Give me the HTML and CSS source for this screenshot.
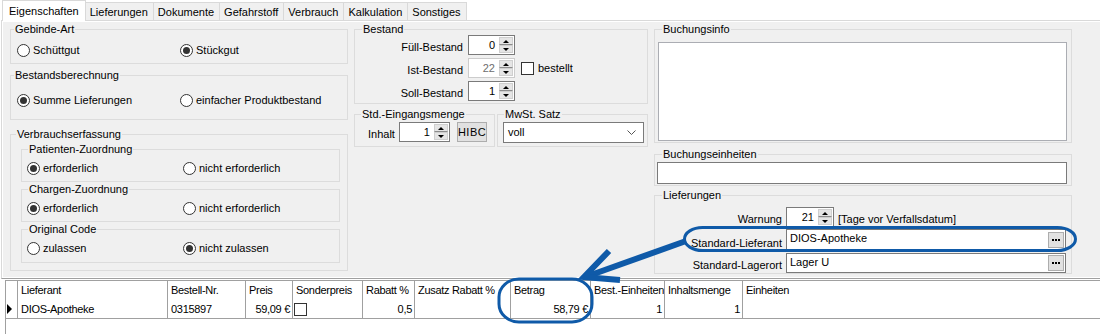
FILE: index.html
```html
<!DOCTYPE html>
<html lang="de">
<head>
  <meta charset="UTF-8" />
  <title>Artikel - Eigenschaften</title>
  <link rel="stylesheet" href="styles.css">
</head>
<body>
  <div class="tabs">
    <div class="tab active">Eigenschaften</div>
    <div class="tab">Lieferungen</div>
    <div class="tab">Dokumente</div>
    <div class="tab">Gefahrstoff</div>
    <div class="tab">Verbrauch</div>
    <div class="tab">Kalkulation</div>
    <div class="tab">Sonstiges</div>
  </div>

  <div class="panel">
    <div class="form">
      <!-- linke Spalte -->
      <div class="col">
        <fieldset class="grp gebinde">
          <legend>Gebinde-Art</legend>
          <div class="radios">
            <label class="radio"><span class="dot"></span>Schüttgut</label>
            <label class="radio"><span class="dot on"></span>Stückgut</label>
          </div>
        </fieldset>

        <fieldset class="grp berechnung">
          <legend>Bestandsberechnung</legend>
          <div class="radios">
            <label class="radio"><span class="dot on"></span>Summe Lieferungen</label>
            <label class="radio"><span class="dot"></span>einfacher Produktbestand</label>
          </div>
        </fieldset>

        <fieldset class="grp verbrauch">
          <legend>Verbrauchserfassung</legend>
          <div class="subs">
            <fieldset class="grp sub">
              <legend>Patienten-Zuordnung</legend>
              <div class="radios">
                <label class="radio"><span class="dot on"></span>erforderlich</label>
                <label class="radio"><span class="dot"></span>nicht erforderlich</label>
              </div>
            </fieldset>
            <fieldset class="grp sub">
              <legend>Chargen-Zuordnung</legend>
              <div class="radios">
                <label class="radio"><span class="dot on"></span>erforderlich</label>
                <label class="radio"><span class="dot"></span>nicht erforderlich</label>
              </div>
            </fieldset>
            <fieldset class="grp sub last">
              <legend>Original Code</legend>
              <div class="radios">
                <label class="radio"><span class="dot"></span>zulassen</label>
                <label class="radio"><span class="dot on"></span>nicht zulassen</label>
              </div>
            </fieldset>
          </div>
        </fieldset>
      </div>

      <!-- mittlere Spalte -->
      <div class="col">
        <fieldset class="grp bestand">
          <legend>Bestand</legend>
          <div class="rows">
            <span class="lbl">Füll-Bestand</span>
            <div class="spin"><span class="num">0</span><span class="arr"><i class="up"></i><i class="dn"></i></span></div>
            <span></span>

            <span class="lbl">Ist-Bestand</span>
            <div class="spin off"><span class="num">22</span><span class="arr"><i class="up"></i><i class="dn"></i></span></div>
            <label class="check"><span class="box"></span>bestellt</label>

            <span class="lbl">Soll-Bestand</span>
            <div class="spin"><span class="num">1</span><span class="arr"><i class="up"></i><i class="dn"></i></span></div>
            <span></span>
          </div>
        </fieldset>

        <div class="pair">
          <fieldset class="grp eingang">
            <legend>Std.-Eingangsmenge</legend>
            <div class="line">
              <span class="lbl">Inhalt</span>
              <div class="spin inhalt"><span class="num">1</span><span class="arr"><i class="up"></i><i class="dn"></i></span></div>
              <button class="btn hibc">HIBC</button>
            </div>
          </fieldset>
          <fieldset class="grp mwst">
            <legend>MwSt. Satz</legend>
            <div class="combo">
              <span>voll</span>
              <svg width="9" height="6" viewBox="0 0 9 6"><polyline points="0.5,0.5 4.5,4.5 8.5,0.5" fill="none" stroke="#555" stroke-width="1"/></svg>
            </div>
          </fieldset>
        </div>
      </div>

      <!-- rechte Spalte -->
      <div class="col">
        <fieldset class="grp info">
          <legend>Buchungsinfo</legend>
          <div class="memo"></div>
        </fieldset>

        <fieldset class="grp einheiten">
          <legend>Buchungseinheiten</legend>
          <div class="edit wide"></div>
        </fieldset>

        <fieldset class="grp liefer">
          <legend>Lieferungen</legend>
          <div class="rows">
            <span class="lbl">Warnung</span>
            <div class="warn">
              <div class="spin tage"><span class="num">21</span><span class="arr"><i class="up"></i><i class="dn"></i></span></div>
              <span class="hint">[Tage vor Verfallsdatum]</span>
            </div>

            <span class="lbl">Standard-Lieferant</span>
            <div class="edit lookup tall"><span>DIOS-Apotheke</span><button class="dots"><i></i><i></i><i></i></button></div>

            <span class="lbl">Standard-Lagerort</span>
            <div class="edit lookup"><span>Lager U</span><button class="dots"><i></i><i></i><i></i></button></div>
          </div>
        </fieldset>
      </div>
    </div>
  </div>

  <div class="grid-wrap">
    <table class="grid">
      <colgroup>
        <col class="w-ind"><col class="w-lief"><col class="w-nr"><col class="w-preis"><col class="w-sonder">
        <col class="w-rabatt"><col class="w-zusatz"><col class="w-betrag"><col class="w-best"><col class="w-inhalt"><col>
      </colgroup>
      <tr>
        <th></th>
        <th>Lieferant</th>
        <th>Bestell-Nr.</th>
        <th>Preis</th>
        <th>Sonderpreis</th>
        <th>Rabatt %</th>
        <th>Zusatz Rabatt %</th>
        <th>Betrag</th>
        <th>Best.-Einheiten</th>
        <th>Inhaltsmenge</th>
        <th>Einheiten</th>
      </tr>
      <tr class="data">
        <td class="ind"><span class="cur"></span></td>
        <td>DIOS-Apotheke</td>
        <td>0315897</td>
        <td class="r">59,09 €</td>
        <td class="c-chk"><span class="box"></span></td>
        <td class="r">0,5</td>
        <td></td>
        <td class="r">58,79 €</td>
        <td class="r">1</td>
        <td class="r">1</td>
        <td></td>
      </tr>
    </table>
  </div>

  <!-- Markierungen aus dem Screenshot -->
  <svg class="marks" width="1100" height="334" viewBox="0 0 1100 334">
    <g fill="none" stroke="#0f5aa8" stroke-width="3">
      <rect x="684.5" y="227.5" width="391" height="23" rx="18" ry="11.5"/>
      <rect x="499" y="279" width="93" height="43" rx="20" ry="18"/>
    </g>
    <g fill="none" stroke="#0f5aa8" stroke-width="6">
      <line x1="686" y1="241" x2="588" y2="276"/>
      <polyline points="609,251 584,277 620,280"/>
    </g>
  </svg>
</body>
</html>
```

FILE: styles.css
```css
*, *::before, *::after { box-sizing: border-box; }
html, body { margin: 0; padding: 0; }
body {
  font-family: "Liberation Sans", Arial, sans-serif;
  font-size: 11px;
  line-height: 13px;
  color: #000;
  background: #fff;
  width: 1100px;
  height: 334px;
  overflow: hidden;
  position: relative;
}

/* Reiter */
.tabs {
  display: flex;
  align-items: flex-end;
  height: 20px;
  padding-left: 2px;
}
.tab {
  height: 18px;
  padding: 3px 5px 0 4px;
  margin-left: -1px;
  border: 1px solid #d9d9d9;
  border-bottom: none;
  background: #f0f0f0;
}
.tab.active {
  height: 21px;
  margin: 0 0 -1px 0;
  padding: 4px 6px 0 6px;
  background: #fff;
  position: relative;
  z-index: 1;
}

.panel {
  margin-left: 1px;
  width: 1110px;
  height: 259px;
  border: 1px solid #d9d9d9;
  border-bottom-color: #a0a0a0;
  background: #fff;
  padding: 1px;
}
.form {
  height: 100%;
  background: #f0f0f0;
  display: grid;
  grid-template-columns: 338px 294px 418px;
  column-gap: 6px;
  align-items: start;
  padding: 1px 0 0 7px;
}
.col { display: flex; flex-direction: column; }

/* Gruppenrahmen */
.grp {
  margin: 0;
  padding: 0;
  min-width: 0;
  border: 1px solid #dcdcdc;
}
.grp > legend {
  margin-left: 6px;
  padding: 0 1px;
  line-height: 13px;
}

.radios {
  display: grid;
  grid-template-columns: 163px auto;
  padding: 8px 0 0 6px;
}
.radio { display: flex; align-items: center; height: 13px; }
.dot {
  width: 13px;
  height: 13px;
  margin-right: 3px;
  border: 1px solid #333;
  border-radius: 50%;
  background: #fff;
  display: flex;
  align-items: center;
  justify-content: center;
}
.dot.on::after {
  content: "";
  width: 7px;
  height: 7px;
  border-radius: 50%;
  background: #333;
}

.gebinde { height: 41px; }
.gebinde > legend, .berechnung > legend { margin-left: 3px; }
.berechnung { height: 51px; margin-top: 5px; }
.berechnung .radios { padding-top: 12px; }
.verbrauch { height: 143px; margin-top: 8px; }
.verbrauch > legend { margin-left: 5px; }
.subs { padding: 2px 7px 0 10px; }
.sub { height: 39px; }
.sub + .sub { margin-top: 1px; }
.sub.last { height: 40px; }
.sub .radios { grid-template-columns: 156px auto; padding: 6px 0 0 5px; }

/* Eingabefelder */
.spin {
  display: flex;
  height: 20px;
  border: 1px solid #7a7a7a;
  background: #fff;
}
.spin .num { flex: 1; text-align: right; padding: 3px 3px 0 0; }
.spin .arr {
  width: 16px;
  display: flex;
  flex-direction: column;
  padding: 1px;
}
.spin .arr i {
  flex: 1;
  display: flex;
  align-items: center;
  justify-content: center;
  background: #e5e5e5;
  border: 1px solid #cfcfcf;
}
.spin .arr i.up { border-bottom-color: #8c8c8c; }
.spin .arr i.up::before {
  content: "";
  border-left: 3px solid transparent;
  border-right: 3px solid transparent;
  border-bottom: 3px solid #000;
}
.spin .arr i.dn::before {
  content: "";
  border-left: 3px solid transparent;
  border-right: 3px solid transparent;
  border-top: 3px solid #000;
}
.spin.off { border-color: #cccccc; }
.spin.off .num { color: #6d6d6d; }

.box {
  display: inline-block;
  width: 13px;
  height: 13px;
  border: 1px solid #333;
  background: #fff;
}
.check { display: flex; align-items: center; gap: 4px; }

.lbl { text-align: right; align-self: end; padding-bottom: 1px; white-space: nowrap; }

/* Bestand */
.bestand { height: 81px; }
.bestand > legend { margin-left: 7px; }
.bestand .rows {
  display: grid;
  grid-template-columns: 108px 47px auto;
  grid-auto-rows: 20px;
  column-gap: 5px;
  row-gap: 3px;
  margin-top: -1px;
}
.bestand .check { margin-left: 1px; }

.pair { display: flex; margin-top: 4px; }
.eingang { width: 141px; height: 39px; }
.mwst { width: 151px; height: 39px; margin-left: 2px; }
.eingang > legend, .mwst > legend { margin-left: 6px; }
.eingang .line {
  display: flex;
  align-items: flex-end;
  padding: 1px 0 0 13px;
}
.eingang .lbl { padding-bottom: 1px; }
.spin.inhalt { width: 51px; margin-left: 4px; }
.btn {
  font: inherit;
  color: #000;
  background: #e1e1e1;
  border: 1px solid #adadad;
  padding: 0;
}
.hibc { width: 30px; height: 20px; margin-left: 7px; letter-spacing: 0.5px; }

.combo {
  margin: 1px 0 0 5px;
  width: 141px;
  height: 21px;
  border: 1px solid #7a7a7a;
  background: #fff;
  display: flex;
  align-items: center;
  justify-content: space-between;
  padding: 0 7px 0 4px;
}

/* rechte Spalte */
.info { height: 120px; }
.info > legend, .einheiten > legend, .liefer > legend { margin-left: 7px; }
.memo {
  margin: 6px 0 0 3px;
  width: 409px;
  height: 99px;
  border: 1px solid #abadb3;
  background: #fff;
}
.einheiten { height: 38px; margin-top: 5px; }
.edit {
  border: 1px solid #7a7a7a;
  background: #fff;
}
.edit.wide { margin: 1px 0 0 2px; width: 410px; height: 22px; }
.liefer { height: 85px; margin-top: 3px; }
.liefer .rows {
  display: grid;
  grid-template-columns: 127px 280px;
  column-gap: 4px;
  row-gap: 2px;
  padding-top: 5px;
}
.warn { display: flex; align-items: flex-end; }
.spin.tage { width: 48px; }
.hint { margin-left: 4px; padding-bottom: 1px; }
.lookup {
  display: flex;
  justify-content: space-between;
  align-items: center;
  height: 20px;
  padding: 0 1px 0 3px;
}
.lookup.tall { height: 22px; }
.lookup span { align-self: flex-start; padding-top: 2px; }
.dots {
  width: 16px;
  height: 16px;
  padding: 0;
  background: #e1e1e1;
  border: 1px solid #adadad;
  display: flex;
  align-items: center;
  justify-content: center;
  gap: 1px;
}
.dots i { width: 2px; height: 2px; background: #000; }

/* Tabelle */
.grid-wrap {
  margin: 1px 0 0 5px;
  height: 60px;
  border-left: 1px solid #a0a0a0;
}
.grid {
  width: 1095px;
  table-layout: fixed;
  border-collapse: separate;
  border-spacing: 0;
  border-top: 1px solid #a0a0a0;
}
.w-ind { width: 12px; }
.w-lief { width: 150px; }
.w-nr { width: 78px; }
.w-preis { width: 47px; }
.w-sonder { width: 70px; }
.w-rabatt { width: 52px; }
.w-zusatz { width: 96px; }
.w-betrag { width: 80px; }
.w-best { width: 74px; }
.w-inhalt { width: 78px; }
.grid th, .grid td {
  height: 19px;
  padding: 0 2px 0 3px;
  border-right: 1px solid #a0a0a0;
  font-weight: normal;
  text-align: left;
  white-space: nowrap;
  overflow: hidden;
  letter-spacing: -0.3px;
}
.grid .data td { border-bottom: 1px solid #a0a0a0; }
.grid td.r { text-align: right; }
.grid td.c-chk { padding-left: 1px; }
.grid td.c-chk .box { vertical-align: middle; }
.grid td.ind { padding: 0 0 0 1px; }
.cur {
  display: block;
  width: 0;
  height: 0;
  border-top: 5px solid transparent;
  border-bottom: 5px solid transparent;
  border-left: 5px solid #000;
}

.marks { position: absolute; top: 0; left: 0; pointer-events: none; }
```
